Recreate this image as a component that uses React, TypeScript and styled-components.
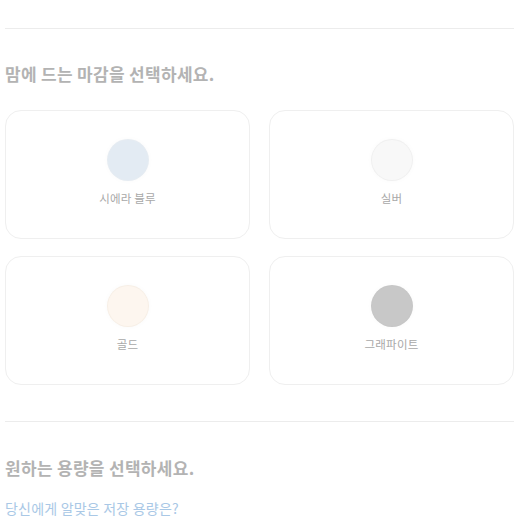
import React from "react";
import styled, { createGlobalStyle } from "styled-components";

const Global = createGlobalStyle`
  html, body { margin: 0; padding: 0; background: #fff; }
  body { font-family: "Noto Sans CJK KR", "Noto Sans", sans-serif; }
`;

const Page = styled.div`
  margin: 0 3px 0 5px;
  padding-top: 28px;
`;

const Rule = styled.hr`
  border: 0;
  border-top: 1px solid #ececec;
  margin: 0;
`;

const Title = styled.h2`
  margin: 0;
  font-size: 17px;
  font-weight: 700;
  color: #b3b3b3;
  line-height: 24px;
  letter-spacing: 0.3px;
`;

const Section = styled.section<{ $top: number; $bottom: number }>`
  padding-top: ${(p) => p.$top}px;
  padding-bottom: ${(p) => p.$bottom}px;
  display: flex;
  flex-direction: column;
`;

const Grid = styled.div`
  display: grid;
  grid-template-columns: 245px 245px;
  column-gap: 19px;
  row-gap: 17px;
  margin-top: 24px;
`;

const Card = styled.div`
  height: 129px;
  box-sizing: border-box;
  border: 1px solid #efefef;
  border-radius: 16px;
  display: flex;
  flex-direction: column;
  align-items: center;
  padding-top: 29px;
`;

const Swatch = styled.div<{ $color: string; $edge: string }>`
  width: 40px;
  height: 40px;
  border-radius: 50%;
  background: ${(p) => p.$color};
  box-shadow: 0 0 0 1px ${(p) => p.$edge}, 0 0 6px rgba(0, 0, 0, 0.03);
`;

const Label = styled.div`
  margin-top: 10px;
  font-size: 11.5px;
  line-height: 16px;
  color: #a8a8a8;
  letter-spacing: 0.2px;
`;

const Link = styled.a`
  margin-top: 19px;
  font-size: 14px;
  line-height: 18px;
  color: #a9c8e6;
  text-decoration: none;
  letter-spacing: 0.2px;
`;

const finishes = [
  { name: "시에라 블루", color: "#e3ebf3", edge: "#e6ecf2" },
  { name: "실버", color: "#f8f8f8", edge: "#f0f0f0" },
  { name: "골드", color: "#fdf6ef", edge: "#f7efe6" },
  { name: "그래파이트", color: "#c8c8c8", edge: "#c6c6c6" },
];

export default function App() {
  return (
    <Page>
      <Global />
      <Rule />
      <Section $top={33} $bottom={36}>
        <Title>맘에 드는 마감을 선택하세요.</Title>
        <Grid>
          {finishes.map((f) => (
            <Card key={f.name}>
              <Swatch $color={f.color} $edge={f.edge} />
              <Label>{f.name}</Label>
            </Card>
          ))}
        </Grid>
      </Section>
      <Rule />
      <Section $top={34} $bottom={0}>
        <Title>원하는 용량을 선택하세요.</Title>
        <Link href="#">당신에게 알맞은 저장 용량은?</Link>
      </Section>
    </Page>
  );
}
